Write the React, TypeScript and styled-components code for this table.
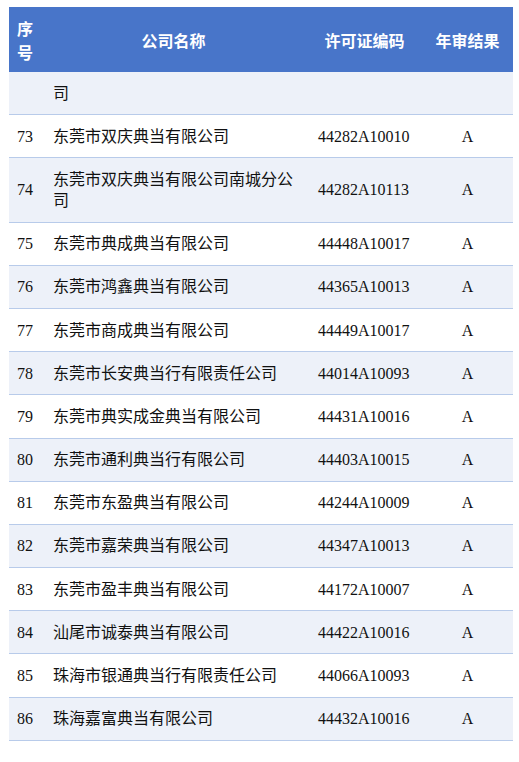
import React from "react";
import styled, { createGlobalStyle } from "styled-components";

const GlobalStyle = createGlobalStyle`
  html, body {
    margin: 0;
    padding: 0;
    background: #ffffff;
  }
  body {
    font-family: "Liberation Serif", "Noto Sans CJK SC", serif;
    color: #111111;
  }
`;

const Page = styled.div`
  padding: 7px 6px 0 9px;
`;

const Table = styled.div`
  display: flex;
  flex-direction: column;
  width: 504px;
`;

const COLS = "31px 267px 115px 91px";

const HeadRow = styled.div`
  display: grid;
  grid-template-columns: ${COLS};
  background: #4875c9;
  color: #ffffff;
  height: 65px;
  align-items: center;
`;

const HeadCell = styled.div<{ $pad?: number }>`
  padding: 0 ${(p) => p.$pad ?? 8}px;
  text-align: center;
  font-family: "Noto Sans CJK SC", "Liberation Sans", sans-serif;
  font-weight: 700;
  font-size: 16px;
  line-height: 24px;
  word-break: break-all;
`;

const Row = styled.div<{ $shaded: boolean }>`
  display: grid;
  grid-template-columns: ${COLS};
  align-items: center;
  background: ${(p) => (p.$shaded ? "#edf1f9" : "#ffffff")};
  border-bottom: 1px solid #b8cbea;
`;

const Cell = styled.div<{ $left: number; $right?: number; $center?: boolean }>`
  padding: 10.6px ${(p) => p.$right ?? 8}px 10.6px ${(p) => p.$left}px;
  font-size: 16px;
  line-height: 21px;
  text-align: ${(p) => (p.$center ? "center" : "left")};
  white-space: ${(p) => (p.$center ? "nowrap" : "normal")};
  word-break: break-all;
  min-height: 21px;
`;

const NumCell = styled(Cell)`
  white-space: nowrap;
  overflow: visible;
`;

const NameCell = styled(Cell)`
  font-family: "Liberation Serif", "Noto Sans CJK SC", serif;
`;

type Item = { no: string; name: string; code: string; result: string };

const rows: Item[] = [
  { no: "", name: "司", code: "", result: "" },
  { no: "73", name: "东莞市双庆典当有限公司", code: "44282A10010", result: "A" },
  { no: "74", name: "东莞市双庆典当有限公司南城分公司", code: "44282A10113", result: "A" },
  { no: "75", name: "东莞市典成典当有限公司", code: "44448A10017", result: "A" },
  { no: "76", name: "东莞市鸿鑫典当有限公司", code: "44365A10013", result: "A" },
  { no: "77", name: "东莞市商成典当有限公司", code: "44449A10017", result: "A" },
  { no: "78", name: "东莞市长安典当行有限责任公司", code: "44014A10093", result: "A" },
  { no: "79", name: "东莞市典实成金典当有限公司", code: "44431A10016", result: "A" },
  { no: "80", name: "东莞市通利典当行有限公司", code: "44403A10015", result: "A" },
  { no: "81", name: "东莞市东盈典当有限公司", code: "44244A10009", result: "A" },
  { no: "82", name: "东莞市嘉荣典当有限公司", code: "44347A10013", result: "A" },
  { no: "83", name: "东莞市盈丰典当有限公司", code: "44172A10007", result: "A" },
  { no: "84", name: "汕尾市诚泰典当有限公司", code: "44422A10016", result: "A" },
  { no: "85", name: "珠海市银通典当行有限责任公司", code: "44066A10093", result: "A" },
  { no: "86", name: "珠海嘉富典当有限公司", code: "44432A10016", result: "A" },
];

export default function App() {
  return (
    <>
      <GlobalStyle />
      <Page>
        <Table>
          <HeadRow>
            <HeadCell>序号</HeadCell>
            <HeadCell>公司名称</HeadCell>
            <HeadCell>许可证编码</HeadCell>
            <HeadCell>年审结果</HeadCell>
          </HeadRow>
          {rows.map((r, i) => (
            <Row key={i} $shaded={i % 2 === 0}>
              <NumCell $left={8} $right={0}>{r.no}</NumCell>
              <NameCell $left={13} $right={12}>{r.name}</NameCell>
              <Cell $left={11}>{r.code}</Cell>
              <Cell $left={0} $right={0} $center>{r.result}</Cell>
            </Row>
          ))}
        </Table>
      </Page>
    </>
  );
}
